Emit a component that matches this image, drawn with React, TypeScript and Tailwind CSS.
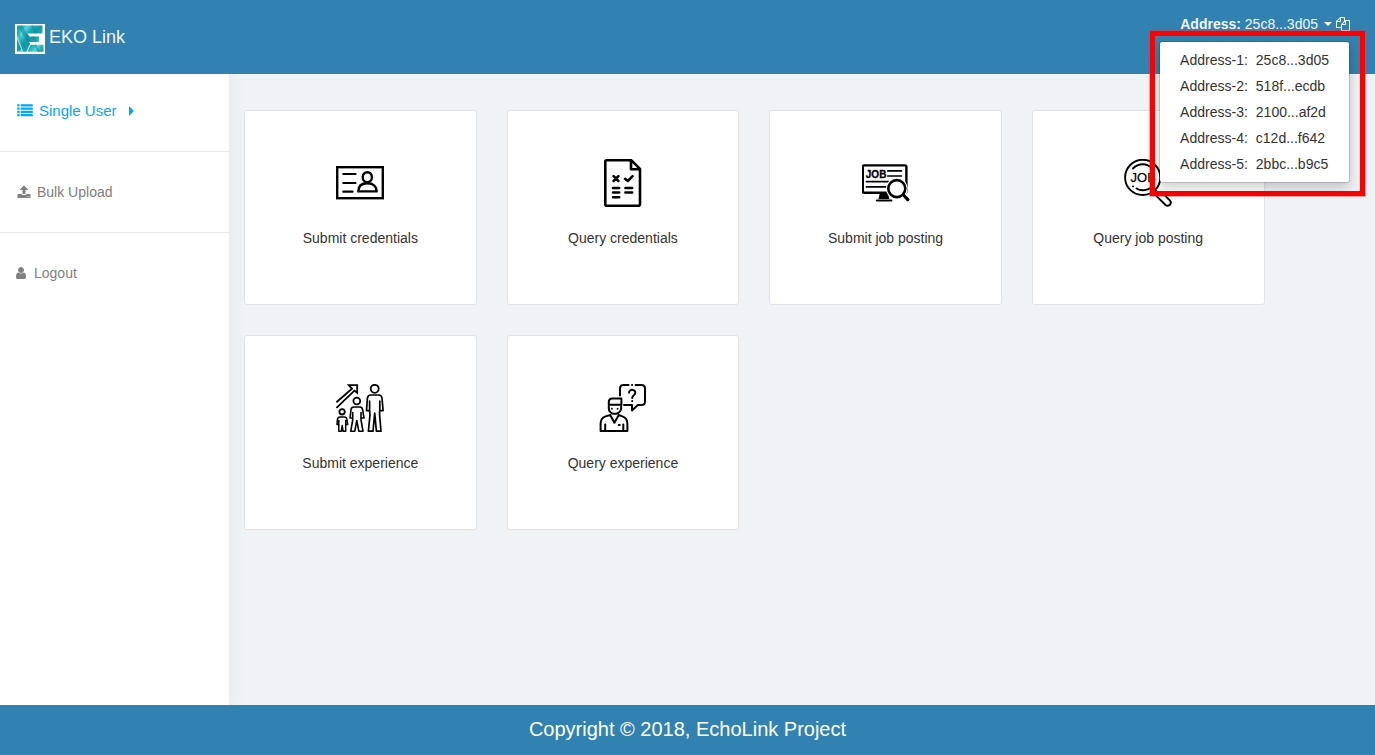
import type { ReactNode } from 'react';

const addresses = ['25c8...3d05', '518f...ecdb', '2100...af2d', 'c12d...f642', '2bbc...b9c5'];

function Drawing({ children, width = 2 }: { children: ReactNode; width?: number }) {
  return (
    <svg
      viewBox="0 0 48 48"
      className="size-12"
      fill="none"
      stroke="#000"
      strokeWidth={width}
      strokeLinecap="round"
      strokeLinejoin="round"
      aria-hidden="true"
    >
      {children}
    </svg>
  );
}

function Glyph({ d, className }: { d: string; className: string }) {
  return (
    <svg viewBox="0 0 1792 1792" className={className} fill="currentColor" aria-hidden="true">
      <path d={d} />
    </svg>
  );
}

const uploadPath =
  'M1344 1472q0-26-19-45t-45-19-45 19-19 45 19 45 45 19 45-19 19-45zm256 0q0-26-19-45t-45-19-45 19-19 45 19 45 45 19 45-19 19-45zm128-224v320q0 40-28 68t-68 28h-1472q-40 0-68-28t-28-68v-320q0-40 28-68t68-28h427q21 56 70.5 92t110.5 36h256q61 0 110.5-36t70.5-92h427q40 0 68 28t28 68zm-325-648q-17 40-59 40h-256v448q0 26-19 45t-45 19h-256q-26 0-45-19t-19-45v-448h-256q-42 0-59-40-17-39 14-69l448-448q18-19 45-19t45 19l448 448q31 30 14 69z';
const userPath =
  'M1536 1399q0 109-62.5 187t-150.5 78h-854q-88 0-150.5-78t-62.5-187q0-85 8.5-160.5t31.5-152 58.5-131 94-89 134.5-34.5q131 128 313 128t313-128q76 0 134.5 34.5t94 89 58.5 131 31.5 152 8.5 160.5zm-256-887q0 159-112.5 271.5t-271.5 112.5-271.5-112.5-112.5-271.5 112.5-271.5 271.5-112.5 271.5 112.5 112.5 271.5z';
const copyPath =
  'M1696 384q40 0 68 28t28 68v1216q0 40-28 68t-68 28h-960q-40 0-68-28t-28-68v-288h-544q-40 0-68-28t-28-68v-672q0-40 20-88t48-76l408-408q28-28 76-48t88-20h416q40 0 68 28t28 68v328q68-40 128-40h416zm-544 213l-299 299h299v-299zm-640-384l-299 299h299v-299zm196 647l316-316v-416h-384v416q0 40-28 68t-68 28h-416v640h512v-256q0-40 20-88t48-76zm956 804v-1152h-384v416q0 40-28 68t-68 28h-416v640h896z';

function ListIcon() {
  return (
    <svg viewBox="0 0 16 13" className="h-[13px] w-4" fill="currentColor" aria-hidden="true">
      {[0.2, 3.5, 6.8, 10.1].map((y) => (
        <g key={y}>
          <rect x="0.2" y={y} width="2.4" height="2.2" rx="0.3" />
          <rect x="3.6" y={y} width="12.2" height="2.2" rx="0.3" />
        </g>
      ))}
    </svg>
  );
}

function Logo() {
  return (
    <svg viewBox="0 0 30 30" className="size-[30px]" aria-hidden="true">
      <defs>
        <linearGradient id="teal" x1="1" y1="1" x2="9" y2="7" gradientUnits="userSpaceOnUse" spreadMethod="reflect">
          <stop offset="0" stopColor="#1397a6" />
          <stop offset="0.5" stopColor="#18a9b6" />
          <stop offset="1" stopColor="#55d3da" />
        </linearGradient>
      </defs>
      <rect width="30" height="30" fill="#fff" />
      <path d="M2 1.5H27.5V9.5H12.5L14.5 12.5H24V18H14L16 20.8H28.5V27.8H2Z" fill="url(#teal)" />
      <path d="M2 12L8.5 27.8H2Z" fill="#93e2e8" />
      <path d="M2 15L6.5 26L2 27.5Z" fill="#1697a6" />
      <path d="M7 1.5L14.5 13.5L12 18L4.5 4Z" fill="#0d8090" opacity="0.45" />
      <path d="M2 8L10 24" stroke="#0d8090" strokeWidth="1" opacity="0.5" fill="none" />
      <path d="M17 1.5L21 9.5M18 12.5L21 18M20 21L24 27.8" stroke="#0d8090" strokeWidth="1.6" opacity="0.5" fill="none" />
      <path d="M12 28L14.5 22L16 20" stroke="#e8fafa" strokeWidth="1" fill="none" />
    </svg>
  );
}

const IdCard = () => (
  <Drawing width={2.4}>
    <rect x="1.2" y="8.2" width="45.6" height="31" strokeLinejoin="miter" />
    <path d="M7.3 15H19.5M7.3 24H19.5M7.3 32.7H16.5" strokeWidth="2.2" />
    <ellipse cx="31.3" cy="18.2" rx="4.6" ry="5" />
    <path d="M22.3 32.4C22.3 27 26 24.3 31.4 24.3S40.6 27 40.6 32.4Z" />
  </Drawing>
);

const Checklist = () => (
  <Drawing width={2.6}>
    <path d="M7.8 1.3H32.4L41 9.8V45.2Q41 46.7 39.4 46.7H7.8Q6.3 46.7 6.3 45.2V2.8Q6.3 1.3 7.8 1.3Z" />
    <path d="M32 1.8V10.2H40.6" />
    <path d="M14.6 17.2L19.4 22M19.4 17.2L14.6 22M26 19.7L28.8 22L33.6 17.2" strokeWidth="2.5" />
    <path d="M14 29H20.2M14 33.6H20.2M14 38.2H20.2M26.4 29H33.2M26.4 33.6H33.2" strokeWidth="2.5" />
  </Drawing>
);

const JobMonitor = () => (
  <Drawing>
    <g transform="translate(-0.6 0)">
      <rect x="1.4" y="6.4" width="43.6" height="27.4" rx="1.5" strokeWidth="2.4" />
      <text x="4.4" y="18.6" fontSize="10" fontWeight="bold" fill="#000" strokeWidth="0.3" fontFamily="Liberation Sans, sans-serif">
        JOB
      </text>
      <path d="M26.4 11.9H40M26.4 17H40M5 22.6H27M5 27.8H25" strokeWidth="1.7" />
      <path d="M18.5 34H26.5L28 40H17Z" fill="#000" stroke="none" />
      <path d="M15.4 41.4H30" />
      <circle cx="35.4" cy="29.6" r="10.8" fill="#fff" stroke="none" />
      <path d="M42 36L46.4 40.6" stroke="#fff" strokeWidth="5" />
      <circle cx="35.4" cy="29.6" r="8.5" strokeWidth="2.6" />
      <path d="M42 36L46.4 40.6" strokeWidth="3.2" />
    </g>
  </Drawing>
);

const JobSearch = () => (
  <Drawing width={1.9}>
    <circle cx="18.7" cy="18.4" r="17.6" />
    <path d="M9 9.5A13.2 13.2 0 0 1 28.4 9.5M12.5 29.5A13.2 13.2 0 0 0 28.4 27.3" />
    <path d="M9 27.3L9.1 27.4" />
    <text x="6.6" y="23" fontSize="13" fill="#000" strokeWidth="0.25" fontFamily="Liberation Sans, sans-serif">
      JOB
    </text>
    <path d="M31 31L34 34" />
    <path d="M32.8 37.4L41.6 46Q43.7 47.8 45.8 45.8Q47.8 43.7 46 41.6L37.4 32.8" />
  </Drawing>
);

const Growth = () => (
  <Drawing width={1.8}>
    <path d="M1 17.8L16 4.6L12.8 1.2H21.2V8.8L18.4 6.6L1 23.4" strokeLinejoin="miter" />
    <circle cx="38.7" cy="4.8" r="4" />
    <path d="M33.6 26.6H30.5L31.4 14.2Q31.8 11 35 11H42.4Q45.6 11 46 14.2L47.1 26.6H43.8V17M33.6 17V26.6L34 31L32.4 47.2H37L38.7 29L40.4 47.2H45L43.6 31V26.6" strokeWidth="1.7" />
    <circle cx="20.8" cy="17" r="3.4" />
    <path d="M16.7 34H14L15 25.6Q15.4 23 18 23H23.6Q26.2 23 26.6 25.6L28 34H25V28.5M16.7 28.5V36L14.8 47.2H18.8L20.8 36.5L22.8 47.2H27L25 36V34" strokeWidth="1.6" />
    <circle cx="6.1" cy="27.8" r="2.7" />
    <path d="M2.8 40.5H1L1.4 35.5Q1.8 33 4 33H8.4Q10.6 33 11 35.5L11.7 40.5H9.7V36.5M2.8 36.5V47.2H5.4L6.2 41.5L7 47.2H9.7V40.5" strokeWidth="1.5" />
  </Drawing>
);

const Question = () => (
  <Drawing width={2}>
    <path d="M21 11.5V4.5Q21 1 24.5 1H29.5M33 1H33.2M36.6 1H42.5Q46 1 46 4.5V17.5Q46 21 42.5 21H38.8L33 26.4V21H25" />
    <path d="M30.1 8.8C30.1 4.8 36.4 5 36.3 8.8C36.2 11.4 33.2 11 33.2 14M33.2 17.1V17.3" />
    <path d="M9.8 20.8V18Q9.8 14.4 13.3 14.4H22.4V20.8ZM9.8 21V24.5Q10 28.2 14 29.8H17.5Q22 28.2 22.2 24V20.8" />
    <path d="M13 24.6V24.8M18.6 24.6V24.8" strokeWidth="1.7" />
    <path d="M11.5 31L6.5 32.4Q1.6 34 1.6 40V47H28.4V40Q28.4 34 23.4 32.4L19.6 31M6.2 40.5V47M24.3 40.5V47M11.2 31L15.4 38.8L19.8 31M19.8 41H20.7" />
  </Drawing>
);

const cards = [
  { label: 'Submit credentials', icon: <IdCard /> },
  { label: 'Query credentials', icon: <Checklist /> },
  { label: 'Submit job posting', icon: <JobMonitor /> },
  { label: 'Query job posting', icon: <JobSearch /> },
  { label: 'Submit experience', icon: <Growth /> },
  { label: 'Query experience', icon: <Question /> },
];

export default function App() {
  return (
    <div className="flex min-h-screen flex-col bg-[#eff3f6] font-['Liberation_Sans',Arial,sans-serif] text-sm text-[#333]">
      <header className="relative z-10 flex h-[74px] items-start justify-between bg-[#3182b0] pr-[25px] pl-[15px] text-white/95">
        <a href="#home" className="flex gap-1 pt-6 text-lg leading-[26px]">
          <Logo />
          <span>EKO Link</span>
        </a>
        <div className="relative flex items-center gap-1 pt-3.5">
          <button type="button" className="flex items-center gap-1.5 leading-5" aria-expanded="true">
            <span>
              <strong>Address:</strong> 25c8...3d05
            </span>
            <span className="border-x-4 border-t-4 border-x-transparent border-t-white" />
          </button>
          <button type="button" aria-label="Copy address">
            <Glyph d={copyPath} className="size-3.5" />
          </button>
          <div className="absolute top-[31px] -right-[15px] border-5 border-[#ff0000] px-1 pt-[5px] pr-2.5 pb-2 ring-1 ring-red-500/40">
            <ul className="rounded-[3px] border border-black/15 bg-white bg-clip-padding py-[5px] whitespace-nowrap text-[#333] shadow-[0_6px_12px_rgba(0,0,0,0.175)]">
              {addresses.map((address, index) => (
                <li key={address}>
                  <a href={`#address-${index + 1}`} className="flex gap-2 px-5 py-[3px] leading-5">
                    <span>Address-{index + 1}:</span>
                    <span>{address}</span>
                  </a>
                </li>
              ))}
            </ul>
          </div>
        </div>
      </header>

      <div className="flex grow">
        <nav className="w-[229px] shrink-0 bg-white text-[#808080] shadow-[1px_0_20px_rgba(0,0,0,0.05)]">
          <a
            href="#single"
            className="flex h-[78px] items-center gap-1.5 border-b border-[#e9e9e9] pb-1 pl-[17px] text-[15px] text-[#03a9f3]"
          >
            <ListIcon />
            <span>Single User</span>
            <span className="ml-1.5 border-y-5 border-l-5 border-y-transparent border-l-[#03a9f3]" />
          </a>
          <a href="#bulk" className="flex h-[81px] items-center gap-1.5 border-b border-[#e9e9e9] pl-[17px]">
            <Glyph d={uploadPath} className="size-3.5" />
            <span>Bulk Upload</span>
          </a>
          <a href="#logout" className="flex h-20 items-center gap-1.5 pl-3.5">
            <Glyph d={userPath} className="size-3.5" />
            <span>Logout</span>
          </a>
        </nav>

        <main className="grow">
          <div className="grid w-11/12 grid-cols-4 gap-[30px] px-[15px] pt-9">
            {cards.map((card) => (
              <a
                key={card.label}
                href="#"
                className="flex h-[195px] flex-col items-center gap-[21px] rounded-[3px] border border-[#dfe3e6] bg-white pt-12"
              >
                {card.icon}
                <span className="leading-5">{card.label}</span>
              </a>
            ))}
          </div>
        </main>
      </div>

      <footer className="relative flex h-[50px] items-center justify-center bg-[#3182b0] pb-0.5 text-xl text-white">
        Copyright © 2018, EchoLink Project
      </footer>
    </div>
  );
}
